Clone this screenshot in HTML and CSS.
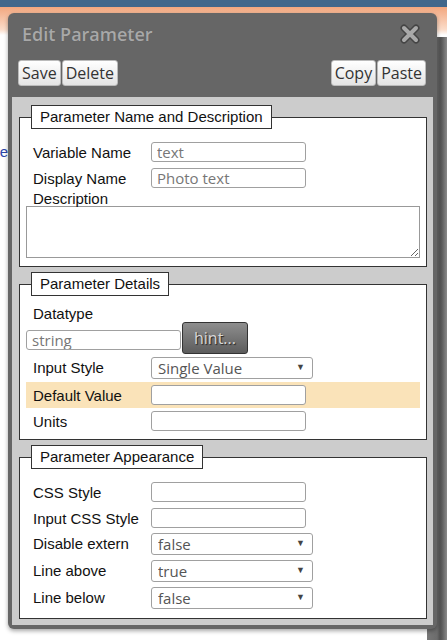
FILE: index.html
```html
<!DOCTYPE html>
<html lang="en">
<head>
<meta charset="UTF-8">
<meta name="viewport" content="width=device-width, initial-scale=1.0">
<title>Edit Parameter</title>
<link rel="stylesheet" href="styles.css">
</head>
<body>

<div class="topbar"></div>
<div class="band"></div>
<div class="page">
    <a class="page-link">Name</a>
</div>
<div class="backwin"></div>

<div class="dialog">
    <div class="dlg-title">
        <span>Edit Parameter</span>
        <svg class="close" width="20" height="20" viewBox="0 0 20 20">
            <path d="M4 4 L16 16 M16 4 L4 16" stroke="#444" stroke-width="7" stroke-linecap="round"/>
            <path d="M4 4 L16 16 M16 4 L4 16" stroke="#a9a9a9" stroke-width="4" stroke-linecap="round"/>
        </svg>
    </div>

    <div class="toolbar">
        <div class="group">
            <button class="tbtn">Save</button><button class="tbtn">Delete</button>
        </div>
        <div class="group">
            <button class="tbtn">Copy</button><button class="tbtn">Paste</button>
        </div>
    </div>

    <div class="panel">
        <fieldset class="box box-first">
            <legend>Parameter Name and Description</legend>
            <div class="row">
                <label>Variable Name</label>
                <input class="field" type="text" value="text">
            </div>
            <div class="row">
                <label>Display Name</label>
                <input class="field" type="text" value="Photo text">
            </div>
            <div class="label-only label-desc">Description</div>
            <textarea class="desc"></textarea>
        </fieldset>

        <fieldset class="box">
            <legend>Parameter Details</legend>
            <div class="label-only">Datatype</div>
            <div class="hint-row">
                <input class="field" type="text" value="string">
                <button class="hint">hint...</button>
            </div>
            <div class="row row-sel">
                <label>Input Style</label>
                <div class="sel"><select><option>Single Value</option></select></div>
            </div>
            <div class="row row-hl">
                <label>Default Value</label>
                <input class="field" type="text">
            </div>
            <div class="row">
                <label>Units</label>
                <input class="field" type="text">
            </div>
        </fieldset>

        <fieldset class="box box-last">
            <legend>Parameter Appearance</legend>
            <div class="row">
                <label>CSS Style</label>
                <input class="field" type="text">
            </div>
            <div class="row">
                <label>Input CSS Style</label>
                <input class="field" type="text">
            </div>
            <div class="row row-sel">
                <label>Disable extern</label>
                <div class="sel"><select><option>false</option></select></div>
            </div>
            <div class="row row-sel">
                <label>Line above</label>
                <div class="sel"><select><option>true</option></select></div>
            </div>
            <div class="row row-sel">
                <label>Line below</label>
                <div class="sel"><select><option>false</option></select></div>
            </div>
        </fieldset>
    </div>
</div>

</body>
</html>
```

FILE: styles.css
```css
body {
    margin: 0;
    padding: 0;
    background-color: #fff;
    font-family: "Liberation Sans", Arial, sans-serif;
    font-size: 15px;
    height: 640px;
    overflow: hidden;
}

.topbar {
    height: 7px;
    background-color: #41678b;
}

.band {
    height: 28px;
    background: linear-gradient(#f2a77f, #fbdcc9 80%, #fff);
}

.page {
    padding-top: 108px;
}

.page-link {
    display: inline-block;
    margin-left: -32px;
    color: #2b45a8;
}

/* dark window peeking out behind the dialog */
.backwin {
    position: absolute;
    left: 427px;
    top: 37px;
    right: 0;
    bottom: 0;
    background: linear-gradient(to right, #777 0, #6c6c6c 10px, #525252 13px, #5c5c5c 15px, #787878 18px, #8a8a8a 20px);
}

.dialog {
    position: absolute;
    left: 8px;
    top: 13px;
    width: 429px;
    height: 616px;
    background-color: #666;
    border-radius: 6px;
    box-shadow: 0 2px 4px rgba(0, 0, 0, 0.35);
}

.dlg-title {
    height: 42px;
    display: flex;
    align-items: center;
    justify-content: space-between;
    padding: 0 17px 0 14px;
    font-family: "Open Sans", sans-serif;
    font-size: 18px;
    font-weight: 600;
    color: #a8a8a8;
    text-shadow: 0 0 1px #555;
}

.close {
    display: block;
}

.toolbar {
    display: flex;
    justify-content: space-between;
    padding: 5px 11px 0 10px;
}

.group {
    display: flex;
    gap: 1px;
}

.tbtn {
    height: 26px;
    padding: 0 3px;
    border: 1px solid #bbb;
    border-radius: 3px;
    background: linear-gradient(#fff, #e4e4e4);
    font-family: "Open Sans", sans-serif;
    font-size: 16px;
    color: #333;
    line-height: 22px;
}

.panel {
    margin: 11px 4px 0 4px;
    height: 528px;
    box-sizing: border-box;
    background-color: #ccc;
    padding: 8px 6px 0 7px;
}

.box {
    margin: 0 0 5px 0;
    padding: 10px 6px 5px 6px;
    border: 1px solid #333;
    background-color: #fff;
}

.box-first {
    padding-bottom: 8px;
}

.box-last {
    padding-bottom: 6px;
}

legend {
    margin-left: 5px;
    padding: 2px 8px;
    border: 1px solid #333;
    background-color: #fff;
    line-height: 18px;
    color: #111;
}

.row {
    display: flex;
    align-items: center;
    height: 26px;
}

.row label {
    width: 118px;
    padding-left: 7px;
    color: #111;
}

.row-sel {
    height: 27px;
    align-items: flex-start;
    padding-top: 2px;
    box-sizing: border-box;
}

.row-sel label {
    line-height: 22px;
}

.row-hl {
    background-color: #fae3b9;
}

.field {
    box-sizing: border-box;
    width: 155px;
    height: 20px;
    margin: 0;
    padding: 0 5px;
    border: 1px solid #a0a0a0;
    border-radius: 3px;
    font-family: "Open Sans", sans-serif;
    font-size: 15px;
    color: #777;
    background-color: #fff;
    outline: none;
}

.label-only {
    padding-left: 7px;
    line-height: 16px;
    color: #111;
}

.label-desc {
    line-height: 15px;
}

.desc {
    display: block;
    box-sizing: border-box;
    width: 100%;
    height: 52px;
    margin: 0;
    border: 1px solid #999;
    resize: vertical;
}

.hint-row {
    display: flex;
    align-items: center;
    height: 32px;
    margin-bottom: 1px;
}

.hint-row .field {
    margin-top: 3px;
}

.hint {
    box-sizing: border-box;
    width: 66px;
    height: 32px;
    margin-left: 1px;
    border: 1px solid #333;
    border-radius: 3px;
    background: linear-gradient(#8e8e8e, #5c5c5c);
    font-family: "Open Sans", sans-serif;
    font-size: 16px;
    color: #d8d8d8;
    text-shadow: 1px 1px 1px #222;
}

.sel {
    position: relative;
    width: 162px;
}

.sel select {
    appearance: none;
    -webkit-appearance: none;
    box-sizing: border-box;
    width: 162px;
    height: 22px;
    margin: 0;
    padding: 0 0 0 6px;
    border: 1px solid #a0a0a0;
    border-radius: 3px;
    background-color: #fff;
    font-family: "Open Sans", sans-serif;
    font-size: 15px;
    color: #555;
    outline: none;
}

.sel::after {
    content: "\25BC";
    position: absolute;
    right: 8px;
    top: 5px;
    font-size: 9px;
    color: #444;
    pointer-events: none;
}
```
